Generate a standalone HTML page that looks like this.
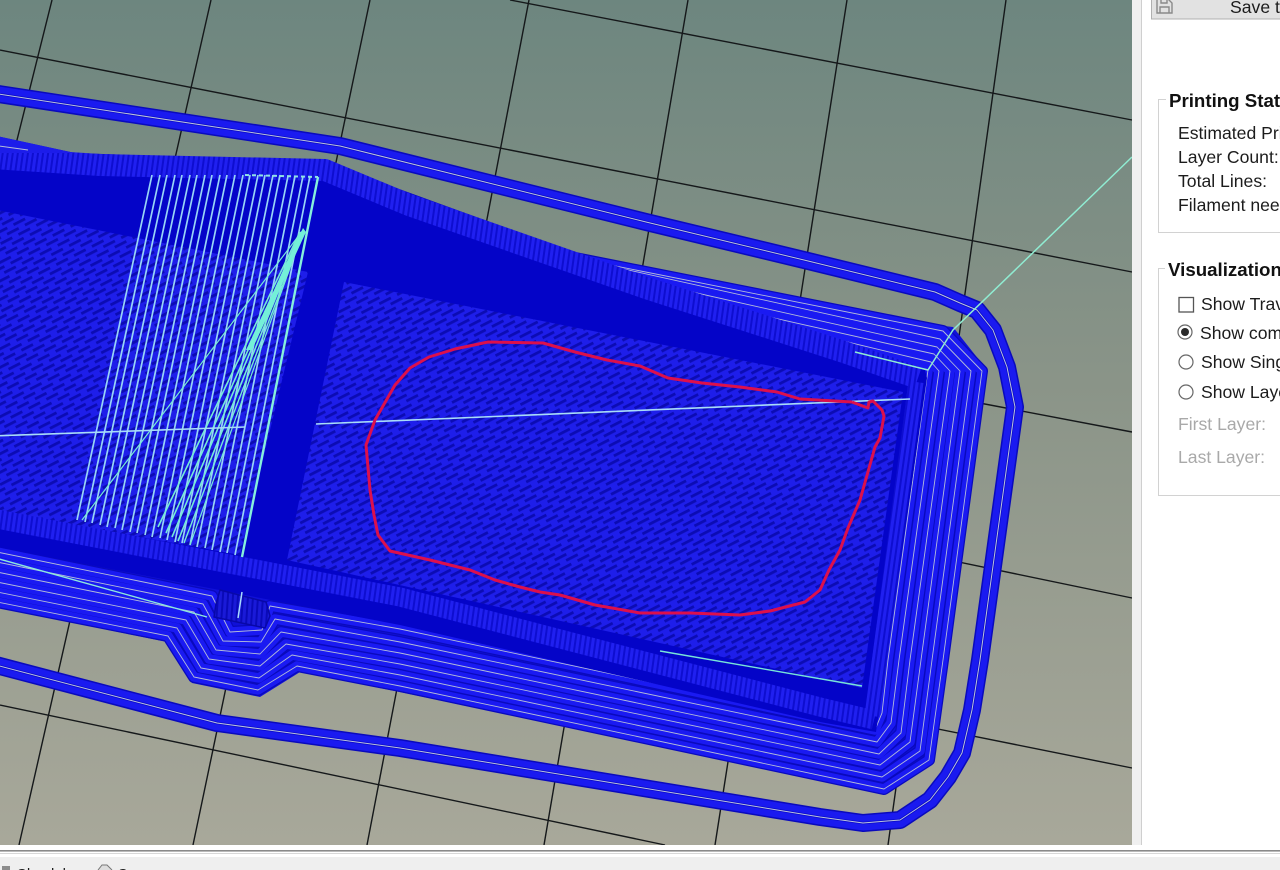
<!DOCTYPE html>
<html><head><meta charset="utf-8"><title>Print preview</title>
<style>
html,body{margin:0;padding:0;width:1280px;height:870px;overflow:hidden;background:#fff}
svg{display:block;position:absolute;left:0;top:0}
text{font-family:"Liberation Sans",sans-serif;font-size:17.6px;fill:#1c1c1c}
.b{font-weight:bold;font-size:18.7px;fill:#111}
.g{fill:#a9a9a9}
</style></head><body>
<svg width="1280" height="870" viewBox="0 0 1280 870" xmlns="http://www.w3.org/2000/svg">
<defs>
<linearGradient id="bg" x1="0" y1="0" x2="0" y2="1">
<stop offset="0" stop-color="#6d867f"/><stop offset=".45" stop-color="#8a9488"/><stop offset="1" stop-color="#a8a89a"/>
</linearGradient>
<pattern id="inf" width="20" height="11" patternUnits="userSpaceOnUse" patternTransform="rotate(-27)">
<rect width="20" height="11" fill="#1e1eea"/>
<rect x="0" y="1.500" width="13" height="2.8" fill="#0c0cb4"/>
<rect x="10" y="7" width="13" height="2.8" fill="#0c0cb4"/>
<rect x="-10" y="7" width="13" height="2.8" fill="#0c0cb4"/>
</pattern>
<pattern id="rib" width="5" height="8" patternUnits="userSpaceOnUse" patternTransform="rotate(8)">
<rect width="5" height="8" fill="#0e0ed0"/><rect width="3" height="8" fill="#2020f0"/>
</pattern>
<pattern id="ribd" width="5" height="8" patternUnits="userSpaceOnUse" patternTransform="rotate(4)">
<rect width="5" height="8" fill="#0a0ab8"/><rect width="3" height="8" fill="#1a1ad8"/>
</pattern>
<path id="sk" fill="none" stroke-linejoin="round" d="M-8,93 L340,146 L646,222 L804,260 L935,292 L960,303 L977,310 L993,330 L1007,367 L1015,407 L980,660 L972,710 L962,753 L948,777 L930,800 L900,820 L863,823 L820,817 L400,748 L217,723 L-8,664"/>
<path id="t5" fill="none" stroke-linejoin="round" d="M555,254 L943,331 L982,371 L943,660 L929,760 L884,789 L400,686 L297,666 L258,690 L194,677 L168,636 L-8,601"/>
<path id="t4" fill="none" stroke-linejoin="round" d="M615,267 L940,339 L971,371 L932,660 L920,751 L882,777 L400,675 L292,655 L259,678 L201,668 L177,628 L-8,591"/>
<path id="t3" fill="none" stroke-linejoin="round" d="M670,287 L937,347 L960,371 L921,660 L910,742 L880,765 L400,664 L286,644 L260,666 L209,659 L186,620 L-8,581"/>
<path id="t2" fill="none" stroke-linejoin="round" d="M725,307 L934,354 L950,371 L910,660 L901,733 L879,754 L400,653 L281,632 L260,654 L216,650 L194,612 L-8,571"/>
<path id="t1" fill="none" stroke-linejoin="round" d="M785,327 L931,362 L939,371 L899,660 L891,723 L877,742 L400,642 L275,619 L261,642 L223,641 L203,604 L-8,561"/>
<path id="t0" fill="none" stroke-linejoin="round" d="M844,350 L928,370 L888,660 L882,713 L875,730 L400,629 L270,606 L262,630 L230,632 L212,596 L-8,551"/>
</defs>

<!-- viewport background -->
<rect width="1132" height="845" fill="url(#bg)"/>

<!-- grid -->
<g stroke="#15181a" stroke-width="1.4" fill="none">
<path d="M52,0 L0,208"/><path d="M211,0 L19,845"/><path d="M370,0 L193,845"/><path d="M529,0 L367,845"/>
<path d="M688,0 L544,845"/><path d="M847,0 L715,845"/><path d="M1006,0 L888,845"/>
<path d="M510,0 L1132,120"/><path d="M0,50 L1132,272"/><path d="M927,393 L1132,432"/>
<path d="M925,555 L1132,598"/><path d="M918,725 L1132,768"/><path d="M0,705 L665,845"/>
</g>

<!-- skirt -->
<g>
<use href="#sk" stroke="#0a0abc" stroke-width="18"/>
<use href="#sk" stroke="#1a1af0" stroke-width="15"/>
<use href="#sk" stroke="#0c0cc8" stroke-width="2.6"/>
<use href="#sk" stroke="#bcc4dc" stroke-width="1"/>
</g>

<!-- brim underlay -->
<polygon points="560,250 935,325 953,327 987,370 946,660 933,763 887,794 820,780 400,692 300,672 260,697 192,683 167,642 -8,606 -8,540 400,600" fill="#1010d8"/>

<!-- brim tubes -->
<g>
<use href="#t5" stroke="#0a0abc" stroke-width="12"/><use href="#t4" stroke="#0a0abc" stroke-width="12"/>
<use href="#t3" stroke="#0a0abc" stroke-width="12"/><use href="#t2" stroke="#0a0abc" stroke-width="12"/>
<use href="#t1" stroke="#0a0abc" stroke-width="12"/><use href="#t0" stroke="#0a0abc" stroke-width="12"/>
<use href="#t5" stroke="#1a1af2" stroke-width="9.5"/><use href="#t4" stroke="#1a1af2" stroke-width="9.5"/>
<use href="#t3" stroke="#1a1af2" stroke-width="9.5"/><use href="#t2" stroke="#1a1af2" stroke-width="9.5"/>
<use href="#t1" stroke="#1a1af2" stroke-width="9.5"/><use href="#t0" stroke="#1a1af2" stroke-width="9.5"/>
<g stroke="#b4bcd8" stroke-width="0.9">
<use href="#t5"/><use href="#t4"/><use href="#t3"/><use href="#t2"/><use href="#t1"/><use href="#t0"/>
</g>
</g>

<!-- object body -->
<polygon points="-8,135 75,153 325,162 567,250 925,370 927,378 876,732 820,722 400,625 -8,546" fill="#0404c8"/>

<!-- infill -->
<polygon points="-8,209 308,272 240,555 -8,510" fill="url(#inf)"/>
<polygon points="344,282 903,392 862,688 287,560" fill="url(#inf)"/>

<!-- ribbed walls -->
<g fill="none" stroke-linejoin="round">
<path d="M-8,158 L100,165 L325,170 L409,205 L646,288 L844,352 L918,378" stroke="url(#rib)" stroke-width="22"/>
<path d="M-8,518 L400,597 L820,707 L874,720" stroke="url(#rib)" stroke-width="19"/>
<path d="M916,382 L872,716" stroke="url(#rib)" stroke-width="15"/>
</g>
<polygon points="-8,135 75,153 -8,153" fill="#1c1cea"/>
<path d="M-8,145 L28,150" stroke="#b4bcd8" stroke-width="1" fill="none"/>

<!-- pillar -->
<path d="M220,590 L266,602 L270,616 L265,628 L214,617 L216,604 Z" fill="url(#ribd)" stroke="#0808a8" stroke-width="1.5" stroke-linejoin="round"/>
<path d="M242,592 L238,618" stroke="#a8dcff" stroke-width="1.5"/>

<!-- white/cyan infill lines -->
<g stroke="#98d4f6" stroke-width="1.7" fill="none">
<path d="M152,175 L77,520"/><path d="M160,175 L85,522"/><path d="M167,175 L92,523"/><path d="M175,175 L100,525"/>
<path d="M182,175 L107,527"/><path d="M190,175 L115,528"/><path d="M197,175 L122,530"/><path d="M205,175 L130,532"/>
<path d="M212,175 L137,533"/><path d="M220,175 L145,535"/><path d="M227,175 L152,537"/><path d="M235,175 L160,538"/>
<path d="M243,175 L167,540"/><path d="M250,175 L175,542"/><path d="M258,175 L182,543"/><path d="M265,175 L190,545"/>
<path d="M273,175 L197,547"/><path d="M280,175 L205,548"/><path d="M288,176 L212,550"/><path d="M295,176 L220,552"/>
<path d="M303,176 L227,553"/><path d="M310,176 L235,555"/>
</g>
<path d="M318,177 L242,557" stroke="#86f0dc" stroke-width="2.4" fill="none"/>
<path d="M245,175 L318,177" stroke="#90e4e4" stroke-width="2" stroke-dasharray="4 3" fill="none"/>
<g stroke="#76ecd6" fill="none">
<path d="M303,230 L82,520" stroke-width="1.2"/>
<path d="M300,232 L158,527" stroke-width="1.6"/>
<path d="M301,232 L166,533" stroke-width="1.6"/>
<path d="M301,232 L172,537" stroke-width="1.6"/>
<path d="M302,232 L178,541" stroke-width="1.6"/>
<path d="M303,232 L184,543" stroke-width="1.4"/>
<path d="M303,232 L190,545" stroke-width="1.2"/>
</g>
<polygon points="303,228 306,232 252,350 246,350" fill="#74f0d8"/>

<!-- travel lines -->
<g fill="none">
<path d="M-8,436 L245,427" stroke="#a8dcf8" stroke-width="1.6"/>
<path d="M316,424 L910,399" stroke="#a8dcf8" stroke-width="1.6"/>
<path d="M1132,157 L953,330 L928,370 L855,352" stroke="#90ecd2" stroke-width="1.5"/>
<path d="M660,651 L862,686" stroke="#78e4d8" stroke-width="1.4"/>
<path d="M-8,557 L207,617" stroke="#8ee8dc" stroke-width="1.4"/>
</g>

<!-- red outline -->
<path d="M852,402 L868,408 L869,402 L873,401 L882,410 L884,416 L880,438 L875,447 L860,500 L848,528 L840,550 L829,570 L820,590 L805,602 L770,611 L740,615 L690,613 L640,613 L595,605 L560,595 L540,592 L520,587 L495,580 L470,570 L430,560 L390,551 L378,535 L374,515 L370,490 L366,445 L375,420 L395,385 L410,368 L429,357 L455,349 L488,342 L543,343 L575,352 L607,360 L640,366 L668,378 L702,383 L740,387 L777,392 L800,399 L852,402" fill="none" stroke="#dc104c" stroke-width="3" stroke-linejoin="round"/>

<!-- right panel -->
<rect x="1132" y="0" width="10" height="850" fill="#f0f0f0"/>
<rect x="1141" y="0" width="1" height="850" fill="#cfcfcf"/>
<rect x="1142" y="0" width="138" height="850" fill="#fff"/>

<rect x="1151.500" y="-4" width="140" height="23" fill="#e2e2e2" stroke="#b0b0b0"/>
<g fill="none" stroke="#8a8a8a" stroke-width="1.4">
<path d="M1157,-2 V13 H1172 V3 L1167,-2 Z"/><path d="M1160,13 V7 H1169 V13"/><path d="M1161,-2 V3 H1167 V-2"/>
</g>
<text x="1230" y="13">Save to</text>

<rect x="1158.500" y="99.500" width="140" height="133" fill="none" stroke="#d2d2d2"/>
<rect x="1166" y="92" width="120" height="16" fill="#fff"/>
<text class="b" x="1169" y="107">Printing Stats</text>
<text x="1178" y="139">Estimated Print</text>
<text x="1178" y="163">Layer Count:</text>
<text x="1178" y="187">Total Lines:</text>
<text x="1178" y="211">Filament needed</text>

<rect x="1158.500" y="268.500" width="140" height="227" fill="none" stroke="#d2d2d2"/>
<rect x="1165" y="260" width="120" height="16" fill="#fff"/>
<text class="b" x="1168" y="276">Visualization</text>

<rect x="1179" y="297.500" width="14.500" height="14.500" fill="#fff" stroke="#555" stroke-width="1.3"/>
<text x="1201" y="310">Show Travel</text>
<circle cx="1185" cy="332" r="7" fill="#fff" stroke="#666" stroke-width="1.2"/>
<circle cx="1185" cy="332" r="4" fill="#2a2a2a"/>
<text x="1200" y="339">Show complete</text>
<circle cx="1186" cy="362" r="7" fill="#fff" stroke="#666" stroke-width="1.2"/>
<text x="1201" y="368">Show Single</text>
<circle cx="1186" cy="392" r="7" fill="#fff" stroke="#666" stroke-width="1.2"/>
<text x="1201" y="398">Show Layers</text>
<text class="g" x="1178" y="430">First Layer:</text>
<text class="g" x="1178" y="463">Last Layer:</text>

<!-- bottom bar -->
<rect x="0" y="845" width="1280" height="25" fill="#fff"/>
<rect x="0" y="850" width="1280" height="1.600" fill="#8a8a8a"/>
<rect x="0" y="853" width="1280" height="1" fill="#d8d8d8"/>
<rect x="0" y="857" width="1280" height="13" fill="#efefef"/>
<rect x="2" y="866" width="8" height="4" fill="#8c8c8c"/>
<text x="16" y="879" style="font-size:15px">Check l</text>
<path d="M98,870 L102,865 H107 L112,870" fill="#ddd" stroke="#777"/>
<text x="117" y="879" style="font-size:15px">C</text>
</svg>
</body></html>
